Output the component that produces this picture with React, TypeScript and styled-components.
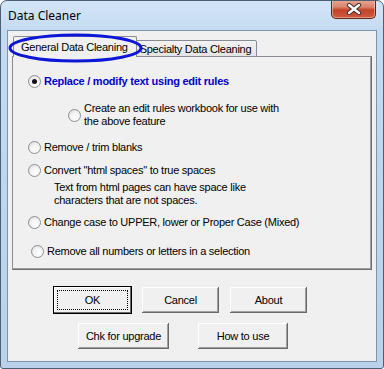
import styled, { createGlobalStyle } from "styled-components";

const GlobalStyle = createGlobalStyle`
  html, body {
    margin: 0;
    padding: 0;
    background: #ffffff;
  }
`;

const UI_FONT = `"Liberation Sans", Arial, sans-serif`;

const Window = styled.div`
  width: 384px;
  height: 369px;
  box-sizing: border-box;
  border: 1px solid #4e5f74;
  border-radius: 7px 7px 3px 3px;
  background: linear-gradient(180deg, #d3e5f8 0%, #c4daf2 30px, #b9d1ea 100%);
  padding: 0 6px 6px 6px;
  display: flex;
  flex-direction: column;
  overflow: hidden;
`;

const TitleBar = styled.div`
  height: 29px;
  display: flex;
  justify-content: space-between;
  align-items: flex-start;
`;

const TitleText = styled.span`
  font-family: "Noto Sans", "Open Sans", sans-serif;
  font-size: 12px;
  color: #000;
  margin: 6px 0 0 1px;
`;

const CloseButton = styled.div`
  width: 45px;
  height: 19px;
  margin-top: -1px;
  margin-right: 1px;
  box-sizing: border-box;
  border: 1px solid #5d2317;
  border-top: none;
  border-radius: 0 0 5px 5px;
  background: linear-gradient(180deg, #e9a797 0%, #d9826b 40%, #c4432a 55%, #cf5a3d 100%);
  box-shadow: inset 0 0 0 1px rgba(255, 220, 210, 0.5);
  display: flex;
  align-items: center;
  justify-content: center;
`;

const Client = styled.div`
  flex: 1;
  border: 1px solid #7f94ab;
  background: #f0f0f0;
  padding: 5px 4px 0 4px;
  font-family: ${UI_FONT};
  font-size: 11px;
  letter-spacing: -0.25px;
  color: #000;
`;

const TabArea = styled.div`
  position: relative;
`;

const TabStrip = styled.div`
  display: flex;
  align-items: flex-end;
  height: 21px;
  padding-left: 1px;
  position: relative;
  z-index: 1;
  margin-bottom: -1px;
`;

const Tab = styled.div<{ $active?: boolean }>`
  box-sizing: border-box;
  height: ${({ $active }) => ($active ? "21px" : "17px")};
  padding: 0 ${({ $active }) => ($active ? "8px" : "5px")} 0 ${({ $active }) => ($active ? "7px" : "3px")};
  display: flex;
  align-items: center;
  border: 1px solid #898c95;
  border-bottom: ${({ $active }) => ($active ? "none" : "1px solid #898c95")};
  border-radius: 2px 2px 0 0;
  background: ${({ $active }) => ($active ? "#f0f0f0" : "linear-gradient(180deg, #f2f2f2, #e4e4e4)")};
  margin-left: ${({ $active }) => ($active ? "0" : "-1px")};
  white-space: nowrap;
`;

const Ellipse = styled.svg`
  position: absolute;
  left: -4px;
  top: -3px;
  z-index: 2;
  pointer-events: none;
`;

const Panel = styled.div`
  height: 214px;
  box-sizing: border-box;
  border: 1px solid #898c95;
  border-right-color: #6f6f6f;
  border-bottom-color: #6f6f6f;
  box-shadow: inset -1px -1px 0 #a0a0a0;
  background: #f0f0f0;
  padding-left: 15px;
  display: flex;
  flex-direction: column;
`;

const OptionRow = styled.div<{ $top: number; $indent?: number }>`
  display: flex;
  align-items: center;
  margin-top: ${({ $top }) => $top}px;
  margin-left: ${({ $indent }) => $indent ?? 0}px;
  line-height: 13px;
`;

const RadioCircle = styled.span<{ $checked?: boolean }>`
  width: 13px;
  height: 13px;
  box-sizing: border-box;
  border-radius: 50%;
  border: 1px solid #8e8f8f;
  background: radial-gradient(circle at 60% 65%, #ffffff 0%, #f4f4f4 45%, #d6d6d6 100%);
  flex: none;
  display: flex;
  align-items: center;
  justify-content: center;
  margin-right: 3px;

  &::after {
    content: "";
    display: ${({ $checked }) => ($checked ? "block" : "none")};
    width: 5px;
    height: 5px;
    border-radius: 50%;
    background: #111;
  }
`;

const Label = styled.span<{ $bold?: boolean }>`
  font-weight: ${({ $bold }) => ($bold ? "bold" : "normal")};
  color: ${({ $bold }) => ($bold ? "#0000cc" : "#000")};
  white-space: pre-line;
`;

const Description = styled.div`
  margin: 4px 0 0 26px;
  line-height: 13px;
  white-space: pre-line;
`;

const ButtonRow = styled.div<{ $top: number; $left: number; $gap: number }>`
  display: flex;
  margin-top: ${({ $top }) => $top}px;
  margin-left: ${({ $left }) => $left}px;
  gap: ${({ $gap }) => $gap}px;
`;

const Button = styled.div<{ $width: number; $default?: boolean }>`
  width: ${({ $width }) => $width}px;
  height: 28px;
  box-sizing: border-box;
  display: flex;
  align-items: center;
  justify-content: center;
  background: #f0f0f0;
  border: 1px solid ${({ $default }) => ($default ? "#000" : "#f0f0f0")};
  box-shadow: ${({ $default }) =>
    $default
      ? "inset -1px -1px 0 #696969, inset 1px 1px 0 #fff"
      : "inset -1px -1px 0 #696969, inset 1px 1px 0 #fff, inset -2px -2px 0 #a0a0a0"};
  position: relative;

  &::before {
    content: "";
    display: ${({ $default }) => ($default ? "block" : "none")};
    position: absolute;
    inset: 3px;
    border: 1px dotted #000;
  }
`;

const options = [
  { top: 18, indent: 0, label: "Replace / modify text using edit rules", bold: true, checked: true },
  { top: 14, indent: 40, label: "Create an edit rules workbook for use with\nthe above feature" },
  { top: 13, indent: 0, label: "Remove / trim blanks" },
  { top: 10, indent: 0, label: "Convert \"html spaces\" to true spaces" },
];

const App = () => {
  return (
    <>
      <GlobalStyle />
      <Window>
        <TitleBar>
          <TitleText>Data Cleaner</TitleText>
          <CloseButton>
            <svg width="16" height="12" viewBox="0 0 16 12">
              <path d="M3 2 L13 10 M13 2 L3 10" stroke="#3a2a26" strokeWidth="4.2" strokeLinecap="round" />
              <path d="M3 2 L13 10 M13 2 L3 10" stroke="#ffffff" strokeWidth="2.4" strokeLinecap="round" />
            </svg>
          </CloseButton>
        </TitleBar>
        <Client>
          <TabArea>
            <TabStrip>
              <Tab $active>General Data Cleaning</Tab>
              <Tab>Specialty Data Cleaning</Tab>
            </TabStrip>
            <Ellipse width="135" height="30" viewBox="0 0 135 30">
              <ellipse cx="67.5" cy="15" rx="65.5" ry="13" fill="none" stroke="#0b16d6" strokeWidth="3" />
            </Ellipse>
          </TabArea>
          <Panel>
            {options.map((o) => (
              <OptionRow key={o.label} $top={o.top} $indent={o.indent}>
                <RadioCircle $checked={o.checked} />
                <Label $bold={o.bold}>{o.label}</Label>
              </OptionRow>
            ))}
            <Description>{"Text from html pages can have space like\ncharacters that are not spaces."}</Description>
            <OptionRow $top={9}>
              <RadioCircle />
              <Label>Change case to UPPER, lower or Proper Case (Mixed)</Label>
            </OptionRow>
            <OptionRow $top={16} $indent={3}>
              <RadioCircle />
              <Label>Remove all numbers or letters in a selection</Label>
            </OptionRow>
          </Panel>
          <ButtonRow $top={16} $left={41} $gap={9}>
            <Button $width={79} $default>OK</Button>
            <Button $width={79}>Cancel</Button>
            <Button $width={79}>About</Button>
          </ButtonRow>
          <ButtonRow $top={8} $left={65} $gap={27}>
            <Button $width={93}>Chk for upgrade</Button>
            <Button $width={92}>How to use</Button>
          </ButtonRow>
        </Client>
      </Window>
    </>
  );
};

export default App;
